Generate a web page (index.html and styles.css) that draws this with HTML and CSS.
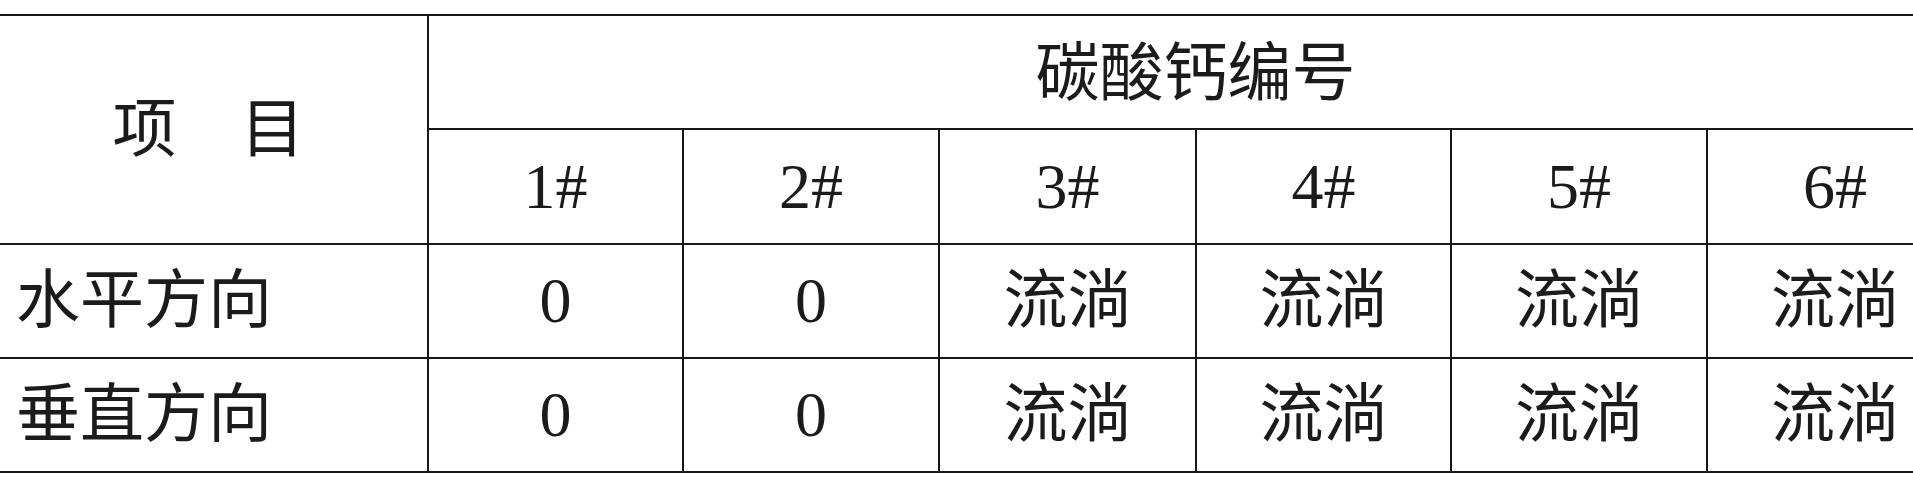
FILE: index.html
```html
<!DOCTYPE html>
<html lang="zh-CN">
<head>
<meta charset="utf-8">
<title>碳酸钙编号</title>
<link rel="stylesheet" href="styles.css">
</head>
<body>
<div class="frame">
  <div class="table">
    <div class="cell item-head">项　目</div>
    <div class="cell group-head">碳酸钙编号</div>
    <div class="cell num">1#</div>
    <div class="cell num">2#</div>
    <div class="cell num">3#</div>
    <div class="cell num">4#</div>
    <div class="cell num">5#</div>
    <div class="cell num">6#</div>

    <div class="cell label">水平方向</div>
    <div class="cell">0</div>
    <div class="cell">0</div>
    <div class="cell">流淌</div>
    <div class="cell">流淌</div>
    <div class="cell">流淌</div>
    <div class="cell">流淌</div>

    <div class="cell label">垂直方向</div>
    <div class="cell">0</div>
    <div class="cell">0</div>
    <div class="cell">流淌</div>
    <div class="cell">流淌</div>
    <div class="cell">流淌</div>
    <div class="cell">流淌</div>
  </div>
</div>
</body>
</html>
```

FILE: styles.css
```css
html, body {
  margin: 0;
  padding: 0;
  background: #ffffff;
  overflow: hidden;
}

.frame {
  width: 1913px;
  height: 481px;
  overflow: hidden;
  padding-top: 14px;
  box-sizing: border-box;
}

.table {
  display: grid;
  width: 1962px;
  grid-template-columns: 427px 253px 254px 255px 253px 254px 254px;
  grid-template-rows: 112px 113px 112px 112px;
  gap: 2px;
  padding: 2px 0;
  background: #1a1718;
  font-family: "Liberation Serif", "Noto Sans CJK SC", serif;
  font-size: 64px;
  font-weight: 400;
  color: #1c1a1b;
  line-height: 1;
}

.cell {
  background: #ffffff;
  display: flex;
  align-items: center;
  justify-content: center;
  white-space: nowrap;
}

.item-head {
  grid-row: 1 / 3;
  grid-column: 1;
  padding-right: 10px;
}

.group-head {
  grid-row: 1;
  grid-column: 2 / -1;
  padding-top: 4px;
}

.label {
  justify-content: flex-start;
  padding-left: 16px;
}
```
